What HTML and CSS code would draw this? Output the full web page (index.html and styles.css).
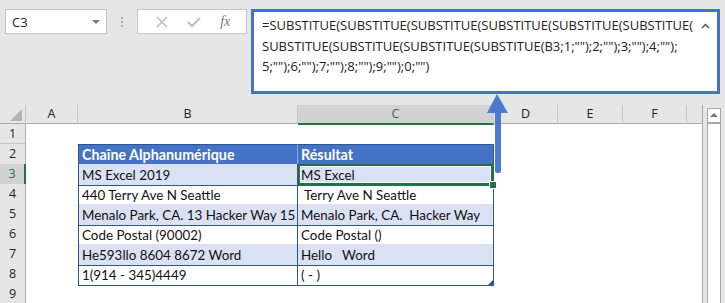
FILE: index.html
```html
<!DOCTYPE html>
<html lang="fr">
<head>
    <meta charset="UTF-8">
    <title>SUBSTITUE - chiffres</title>
    <link rel="stylesheet" href="styles.css">
</head>
<body>
<div class="app">

    <div class="toolbar">
        <div class="namebox">
            <span>C3</span>
            <span class="drop"></span>
        </div>
        <div class="grip"><i></i><i></i><i></i></div>
        <div class="fxbox">
            <svg width="12" height="12" viewBox="0 0 12 12"><path d="M1 1L11 11M11 1L1 11" stroke="#bdbdbd" stroke-width="1.6" fill="none"/></svg>
            <svg width="14" height="12" viewBox="0 0 14 12"><path d="M1 6L5 10L13 2" stroke="#bdbdbd" stroke-width="2" fill="none"/></svg>
            <span class="fx">fx</span>
        </div>
        <div class="formula">
            <div class="formula-text">=SUBSTITUE(SUBSTITUE(SUBSTITUE(SUBSTITUE(SUBSTITUE(SUBSTITUE(<br>SUBSTITUE(SUBSTITUE(SUBSTITUE(SUBSTITUE(B3;1;"");2;"");3;"");4;"");<br>5;"");6;"");7;"");8;"");9;"");0;"")</div>
            <svg class="collapse" width="9" height="6" viewBox="0 0 9 6"><path d="M1 5L4.5 1.5L8 5" stroke="#555" stroke-width="1.5" fill="none"/></svg>
        </div>
    </div>

    <div class="sheet">
        <div class="grid">
            <div class="row head">
                <div class="corner"><span></span></div>
                <div class="colh">A</div>
                <div class="colh">B</div>
                <div class="colh sel">C</div>
                <div class="colh">D</div>
                <div class="colh">E</div>
                <div class="colh">F</div>
                <div class="colh last"></div>
            </div>
            <div class="row">
                <div class="rowh">1</div>
            </div>
            <div class="row">
                <div class="rowh">2</div>
                <div></div>
                <div class="cell th first">Chaîne Alphanumérique</div>
                <div class="cell th">Résultat</div>
            </div>
            <div class="row band">
                <div class="rowh sel">3</div>
                <div></div>
                <div class="cell first">MS Excel 2019</div>
                <div class="cell active">MS Excel<span class="handle"></span></div>
            </div>
            <div class="row">
                <div class="rowh">4</div>
                <div></div>
                <div class="cell first">440 Terry Ave N Seattle</div>
                <div class="cell">&nbsp;Terry Ave N Seattle</div>
            </div>
            <div class="row band">
                <div class="rowh">5</div>
                <div></div>
                <div class="cell first">Menalo Park, CA. 13 Hacker Way 15</div>
                <div class="cell">Menalo Park, CA.&nbsp; Hacker Way</div>
            </div>
            <div class="row">
                <div class="rowh">6</div>
                <div></div>
                <div class="cell first">Code Postal (90002)</div>
                <div class="cell">Code Postal ()</div>
            </div>
            <div class="row band">
                <div class="rowh">7</div>
                <div></div>
                <div class="cell first">He593llo 8604 8672 Word</div>
                <div class="cell">Hello&nbsp;&nbsp; Word</div>
            </div>
            <div class="row">
                <div class="rowh">8</div>
                <div></div>
                <div class="cell first">1(914 - 345)4449</div>
                <div class="cell end">( - )</div>
            </div>
            <div class="row">
                <div class="rowh">9</div>
            </div>
        </div>
        <div class="vscroll">
            <div class="up"></div>
        </div>
    </div>

    <svg class="arrow" width="23" height="80" viewBox="0 0 23 80">
        <path d="M11 0L22 19L1 19Z" fill="#4a7bd0"/>
        <path d="M9 19H15V77Q15 79 13 79H11Q9 79 9 77Z" fill="#4a7bd0"/>
    </svg>

</div>
</body>
</html>
```

FILE: styles.css
```css
body {
    margin: 0;
    background-color: #e6e6e6;
    font-family: 'Open Sans', sans-serif;
    color: #333;
}
.app {
    position: relative;
    width: 725px;
    height: 303px;
    overflow: hidden;
}
.toolbar {
    display: flex;
    align-items: flex-start;
    height: 105px;
    padding-top: 9px;
    box-sizing: border-box;
}
.namebox {
    margin-left: 5px;
    width: 102px;
    height: 25px;
    box-sizing: border-box;
    border: 1px solid #c6c6c6;
    background-color: #fff;
    display: flex;
    align-items: center;
    justify-content: space-between;
    padding: 0 6px 0 6px;
    font-size: 13px;
    color: #222;
}
.namebox .drop {
    width: 0;
    height: 0;
    border-left: 4px solid transparent;
    border-right: 4px solid transparent;
    border-top: 4px solid #777;
}
.grip {
    width: 30px;
    height: 25px;
    display: flex;
    flex-direction: column;
    align-items: center;
    justify-content: center;
    gap: 2px;
}
.grip i {
    width: 2px;
    height: 2px;
    background-color: #aaa;
}
.fxbox {
    width: 110px;
    height: 25px;
    box-sizing: border-box;
    border: 1px solid #c6c6c6;
    background-color: #fff;
    display: flex;
    align-items: center;
    justify-content: space-around;
    padding: 0 6px 0 8px;
}
.fxbox .fx {
    font-family: 'Liberation Serif', serif;
    font-style: italic;
    font-size: 14px;
    color: #777;
}
.formula {
    margin-left: 4px;
    width: 469px;
    height: 85px;
    box-sizing: border-box;
    border: 3px solid #4472c4;
    background-color: #fff;
    display: flex;
    justify-content: space-between;
    padding: 3px 7px 0 8px;
}
.formula-text {
    font-size: 13px;
    line-height: 20.5px;
    color: #222;
    white-space: nowrap;
}
.formula .collapse {
    margin-top: 8px;
}
.sheet {
    display: flex;
}
.grid {
    width: 703px;
    background-color: #fff;
    border-right: 1px solid #a6a6a6;
    box-sizing: border-box;
}
.row {
    display: grid;
    grid-template-columns: 26px 52px 220px 196px 64px 65px 64px 15px;
    height: 20px;
}
.row.head {
    height: 19px;
    background-color: #e6e6e6;
    border-bottom: 1px solid #ababab;
    box-sizing: border-box;
}
.corner {
    position: relative;
    border-right: 1px solid #c6c6c6;
}
.corner span {
    position: absolute;
    right: 3px;
    bottom: 3px;
    width: 0;
    height: 0;
    border-left: 12px solid transparent;
    border-bottom: 12px solid #b4b4b4;
}
.colh {
    border-right: 1px solid #c6c6c6;
    text-align: center;
    font-size: 12.5px;
    line-height: 18px;
    color: #222;
}
.colh.last {
    border-right: none;
}
.colh.sel {
    background-color: #d2d2d2;
    color: #217346;
    border-bottom: 2px solid #217346;
    margin-bottom: -1px;
}
.rowh {
    background-color: #e6e6e6;
    border-right: 1px solid #ababab;
    border-bottom: 1px solid #c6c6c6;
    text-align: center;
    font-size: 12.5px;
    line-height: 19px;
    color: #222;
}
.rowh.sel {
    background-color: #d2d2d2;
    color: #217346;
    border-right: 2px solid #217346;
}
.cell {
    position: relative;
    box-sizing: border-box;
    border-right: 1px solid #2f5597;
    border-bottom: 1px solid #2f5597;
    padding-left: 3px;
    padding-top: 1px;
    font-family: 'Lato', sans-serif;
    font-size: 13.4px;
    line-height: 20px;
    color: #111;
    white-space: nowrap;
}
.cell.first {
    border-left: 1px solid #2f5597;
}
.band .cell {
    background-color: #d9e1f2;
}
.cell.th {
    background-color: #4472c4;
    color: #fff;
    font-weight: bold;
    font-size: 14.3px;
    border-top: 1px solid #2f5597;
    border-right-color: #8ea9db;
    padding-top: 0;
    line-height: 19px;
}
.cell.th:last-child {
    border-right-color: #2f5597;
}
.cell.active {
    box-shadow: inset 0 0 0 2px #217346, inset 0 0 0 3px #fff;
    border-color: #217346;
}
.cell.active .handle {
    position: absolute;
    right: -4px;
    bottom: -4px;
    width: 6px;
    height: 6px;
    background-color: #217346;
    border: 1px solid #fff;
    z-index: 2;
}
.cell.end::after {
    content: "";
    position: absolute;
    right: 0;
    bottom: 0;
    border-left: 5px solid transparent;
    border-bottom: 5px solid #2f5597;
}
.vscroll {
    margin-left: 4px;
    width: 14px;
    height: 198px;
    box-sizing: border-box;
    border: 1px solid #a6a6a6;
    background-color: #fff;
    margin-top: 3px;
}
.vscroll .up {
    height: 13px;
    border-bottom: 2px solid #a6a6a6;
    position: relative;
}
.vscroll .up::after {
    content: "";
    position: absolute;
    left: 2px;
    top: 4px;
    border-left: 4px solid transparent;
    border-right: 4px solid transparent;
    border-bottom: 4px solid #777;
}
.arrow {
    position: absolute;
    left: 486px;
    top: 94px;
}
```
